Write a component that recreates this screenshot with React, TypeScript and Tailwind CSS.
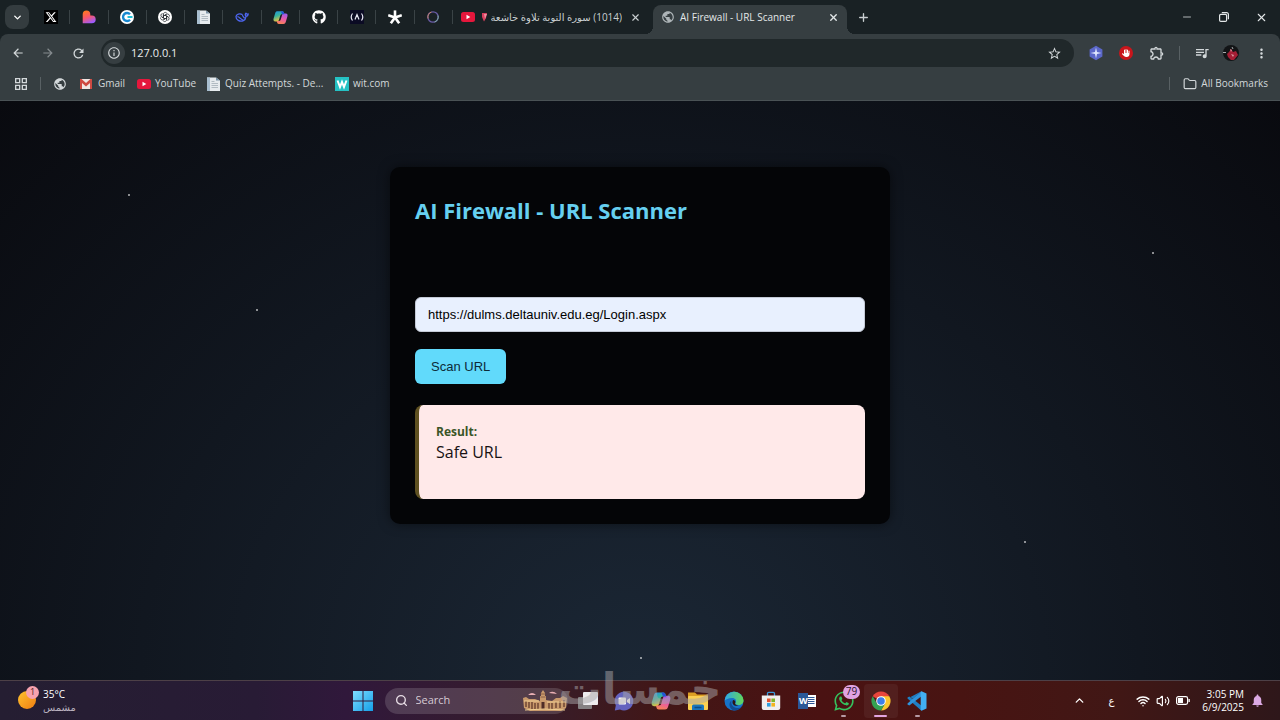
import { useState } from "react";
import type { ReactNode } from "react";
import { ChevronDown, ChevronUp, Folder, Minus, Plus, Search, Volume2, Wifi, X } from "lucide-react";
import { FaGithub, FaHand, FaWhatsapp, FaXTwitter } from "react-icons/fa6";
import {
  MdArrowBack,
  MdArrowForward,
  MdInfoOutline,
  MdMoreVert,
  MdNotifications,
  MdOutlineExtension,
  MdOutlineGridView,
  MdPublic,
  MdQueueMusic,
  MdRefresh,
  MdStarBorder,
} from "react-icons/md";

const STARS = [
  { left: 10, top: 16 },
  { left: 20, top: 36 },
  { left: 50, top: 96 },
  { left: 80, top: 76 },
  { left: 90, top: 26 },
];

const YoutubeIcon = () => (
  <svg viewBox="0 0 14 10" className="h-[10px] w-[14px] shrink-0">
    <rect width="14" height="10" rx="2.5" fill="#e5173c" />
    <path d="M5.5 2.8v4.4L9.3 5z" fill="#fff" />
  </svg>
);

const DocsIcon = () => (
  <svg viewBox="0 0 14 14" className="size-[14px] shrink-0">
    <path d="M0 .5h9l4 3V14H0z" fill="#e6ebee" />
    <path d="M0 .5h3V14H0z" fill="#a9bfd0" />
    <path d="M9 .5l4 3H9z" fill="#7c95a8" />
    <path d="M4.500 4.500h3M4.500 6.500h6.500M4.500 8.500h6.500M4.500 10.500h6.500" stroke="#9aa6af" strokeWidth=".7" />
  </svg>
);

const LovableIcon = () => (
  <svg viewBox="0 0 14 14" className="size-[14px]">
    <defs>
      <linearGradient id="lovable" x1="0.2" y1="0" x2="0.6" y2="1">
        <stop offset="0" stopColor="#ff7a1a" />
        <stop offset=".5" stopColor="#f9566a" />
        <stop offset="1" stopColor="#9b5cff" />
      </linearGradient>
    </defs>
    <path
      d="M.7 4.2a3.8 3.8 0 0 1 7.6 0v1.4h1.6a3.7 3.7 0 0 1 0 7.6H.7z"
      fill="url(#lovable)"
    />
  </svg>
);

const CrispIcon = () => (
  <svg viewBox="0 0 14 14" className="size-[14px]">
    <circle cx="7" cy="7" r="7" fill="#fff" />
    <path d="M10 4.300a4 4 0 1 0 0 5.400" fill="none" stroke="#1787cf" strokeWidth="2.400" />
    <path d="M7.500 7h5" stroke="#1fc0d6" strokeWidth="2" />
  </svg>
);

const KnotIcon = () => (
  <svg viewBox="0 0 14 14" className="size-[14px]">
    <circle cx="7" cy="7" r="7" fill="#fff" />
    <g fill="none" stroke="#20252a" strokeWidth=".7">
      {[0, 60, 120, 180, 240, 300].map((angle) => (
        <path
          key={angle}
          transform={`rotate(${angle} 7 7)`}
          d="M5.400 7.900V4.200a1.900 1.900 0 0 1 3.400-1.100M5.400 6.100l3.200-1.900"
        />
      ))}
    </g>
  </svg>
);

const WhaleIcon = () => (
  <svg viewBox="0 0 14 14" className="size-[14px]" fill="none" stroke="#4d66f0">
    <path
      d="M7.400 4.600C4.800 3 1.200 4 1 6.600c-.2 3.200 3.800 5.600 7.400 4.100 2.300-1 2.500-3.400 2.600-4.300 1.400 0 2-.8 2.200-2.400-1 .4-1.600.2-2.300-.8-.8.8-.8 2 .1 3.200"
      strokeWidth="1.300"
      strokeLinejoin="round"
    />
    <path d="M2.400 6.700c2.400.1 3.200 3 6 3.300M7.500 4.600c-.2 1.800 1 2 2.200 3.800" strokeWidth="1.200" />
  </svg>
);

const AsteriskIcon = () => (
  <svg viewBox="0 0 14 14" className="size-[14px]" stroke="#fff" strokeWidth="2.600">
    {[0, 72, 144, 216, 288].map((angle) => (
      <path key={angle} transform={`rotate(${angle} 7 7.500)`} d="M7 7.500V.4" />
    ))}
  </svg>
);

const CopilotIcon = ({ className }: { className: string }) => (
  <svg viewBox="0 0 20 20" className={className}>
    <defs>
      <linearGradient id="copilotCool" x1="0" y1="0" x2=".4" y2="1">
        <stop offset="0" stopColor="#1d8fe8" />
        <stop offset=".5" stopColor="#39b59b" />
        <stop offset="1" stopColor="#f6c13b" />
      </linearGradient>
      <linearGradient id="copilotWarm" x1=".6" y1="0" x2=".3" y2="1">
        <stop offset="0" stopColor="#a25be8" />
        <stop offset=".5" stopColor="#ea5aa5" />
        <stop offset="1" stopColor="#f78452" />
      </linearGradient>
    </defs>
    <path d="M6 1.500h6.200c1.500 0 2 .8 2.400 2.200l.5 1.800H12c-1.500 0-2 .8-2.400 2.200L8 13c-.5 1.500-1.200 2.200-2.600 2.200H3C.8 15.200.2 13.400.8 11.300L3 4c.5-1.700 1.400-2.500 3-2.500z" fill="url(#copilotCool)" />
    <path d="M14 18.500H7.800c-1.500 0-2-.8-2.400-2.200l-.5-1.800H8c1.500 0 2-.8 2.400-2.200L12 7c.5-1.500 1.200-2.200 2.600-2.200H17c2.200 0 2.800 1.800 2.200 3.900L17 16c-.5 1.700-1.400 2.500-3 2.500z" fill="url(#copilotWarm)" />
    <path d="M12.200 1.500c1.500 0 2 .8 2.400 2.200l.5 1.800H12l-1.500-4z" fill="#2353d6" />
  </svg>
);

const RingIcon = () => (
  <svg viewBox="0 0 14 14" className="size-[14px]" fill="none">
    <circle cx="7" cy="7" r="5.200" stroke="#6a5ca8" strokeWidth="1.300" />
    <path d="M2.100 8.500a5.200 5.200 0 0 1 3.300-6.500" stroke="#c98563" />
    <path d="M12 5.500a5.200 5.200 0 0 1-3.400 6.500" stroke="#7db0a0" />
  </svg>
);

const PINNED: { name: string; icon: ReactNode }[] = [
  { name: "X", icon: <span className="bg-black p-[1px] text-white"><FaXTwitter size={12} /></span> },
  { name: "Lovable", icon: <LovableIcon /> },
  { name: "Chat", icon: <CrispIcon /> },
  { name: "ChatGPT", icon: <KnotIcon /> },
  { name: "Quiz", icon: <DocsIcon /> },
  { name: "DeepSeek", icon: <WhaleIcon /> },
  { name: "Copilot", icon: <CopilotIcon className="size-[15px]" /> },
  { name: "GitHub", icon: <FaGithub size={14} className="text-white" /> },
  {
    name: "Lambda",
    icon: (
      <svg viewBox="0 0 14 14" className="size-[14px]" fill="none" stroke="#e8e8f4">
        <rect width="14" height="14" fill="#0b0b24" stroke="none" />
        <path d="M2.500 3.500Q-.1 7 2.500 10.500M11.500 3.500q2.600 3.500 0 7M5 9.500l2-5 2 5" strokeWidth="1.200" />
      </svg>
    ),
  },
  { name: "Asterisk", icon: <AsteriskIcon /> },
  { name: "Ring", icon: <RingIcon /> },
];

const TabStrip = () => (
  <div className="flex h-[34px] items-center">
    <button aria-label="Search tabs" className="ml-[5px] flex size-6 items-center justify-center rounded-lg bg-[#343c3f] text-white">
      <ChevronDown size={11} strokeWidth={3} />
    </button>
    <div className="ml-[3px] grid w-[421px] grid-cols-11">
      {PINNED.map(({ name, icon }) => (
        <button key={name} aria-label={name} className="flex h-[14px] items-center justify-center border-r border-[#3a4346]">
          {icon}
        </button>
      ))}
    </div>
    <div className="flex h-full w-[200px] items-center pr-3 pl-2 text-[#c9cfd1]">
      <YoutubeIcon />
      <svg viewBox="0 0 5 10" className="ml-[7px] h-[10px] w-[5px] shrink-0">
        <path d="M0 1h5L4 6 2 9.500 0 5z" fill="#d9405f" />
        <path d="M2 2h3L3 7z" fill="#f08ca0" />
      </svg>
      <span dir="rtl" className="ml-1 flex-1 overflow-hidden text-[10px] whitespace-nowrap">
        (1014) سورة التوبة تلاوة خاشعة
      </span>
      <button aria-label="Close tab" className="ml-2"><X size={11} strokeWidth={2.5} /></button>
    </div>
    <div className="relative mt-auto flex h-[29px] w-[194px] items-center rounded-t-lg bg-[#363e41] pr-2 pb-[5px] pl-2 text-[#e3e7e8]">
      <span className="absolute bottom-0 -left-2 size-2 bg-[radial-gradient(circle_at_top_left,transparent_8px,#363e41_8px)]" />
      <span className="absolute -right-2 bottom-0 size-2 bg-[radial-gradient(circle_at_top_right,transparent_8px,#363e41_8px)]" />
      <MdPublic size={14} className="text-[#aeb5b8]" />
      <span className="ml-[5px] flex-1 text-[10px] whitespace-nowrap">AI Firewall - URL Scanner</span>
      <button aria-label="Close active tab"><X size={11} strokeWidth={3} /></button>
    </div>
    <button aria-label="New tab" className="ml-[10px] text-[#c9cfd1]"><Plus size={13} strokeWidth={2.5} /></button>
    <div className="ml-auto flex items-center gap-[26px] pr-3 text-[#e3e7e8]">
      <button aria-label="Minimize"><Minus size={12} strokeWidth={1.5} /></button>
      <button aria-label="Restore">
        <svg viewBox="0 0 10 10" className="size-[10px]" fill="none" stroke="currentColor" strokeWidth="1.200">
          <rect x=".6" y="2.400" width="7" height="7" rx="1.200" />
          <path d="M2.800.6h4.800a1.800 1.800 0 0 1 1.800 1.800v4.800" />
        </svg>
      </button>
      <button aria-label="Close window"><X size={13} strokeWidth={2} /></button>
    </div>
  </div>
);

const Toolbar = () => (
  <div className="flex h-[36px] items-center rounded-t-lg bg-[#363e41] pt-[2px] text-[#d3d8da]">
    <div className="flex w-[101px] items-center gap-4 pl-[11px]">
      <button aria-label="Back"><MdArrowBack size={14} /></button>
      <button aria-label="Forward" className="text-[#858c8f]"><MdArrowForward size={14} /></button>
      <button aria-label="Reload"><MdRefresh size={15} /></button>
    </div>
    <div className="flex h-7 flex-1 items-center rounded-full bg-[#20282a] pr-3 pl-[2px]">
      <span className="flex size-[22px] items-center justify-center rounded-full bg-[#363e41]">
        <MdInfoOutline size={14} />
      </span>
      <input
        aria-label="Address"
        defaultValue="127.0.0.1"
        className="ml-[6px] min-w-0 flex-1 bg-transparent text-[11px] text-[#e8ecee] outline-none"
      />
      <button aria-label="Bookmark this page"><MdStarBorder size={15} /></button>
    </div>
    <div className="flex items-center pr-[11px] pl-[14px]">
      <button aria-label="Spark">
        <svg viewBox="0 0 16 16" className="size-4">
          <path d="M8 .8l6.400 3.600v7.200L8 15.200l-6.400-3.600V4.400z" fill="#5b67c9" />
          <path d="M8 2.500l1 4.500 4.500 1-4.500 1-1 4.500-1-4.500-4.500-1L7 7z" fill="#dfe6ff" />
        </svg>
      </button>
      <button aria-label="Ad blocker" className="ml-[15px] flex size-[14px] items-center justify-center rounded-full bg-[#c9151b] text-white">
        <FaHand size={8} />
      </button>
      <button aria-label="Extensions" className="ml-4"><MdOutlineExtension size={16} /></button>
      <span className="mx-[14px] h-[14px] w-px bg-[#596164]" />
      <button aria-label="Media"><MdQueueMusic size={16} /></button>
      <button aria-label="Profile" className="ml-[13px]">
        <svg viewBox="0 0 16 16" className="size-4">
          <circle cx="8" cy="8" r="8" fill="#121416" />
          <path d="M4 9l2-2 2-3 2 3 3-1 2 4-4 5H8l-3-3z" fill="#a51e35" />
          <path d="M7 4l2 1-1 2zM8 9l3 1-1 2z" fill="#d99ba2" />
          <path d="M0 7.500h3M9 2l1 2" stroke="#cfd3d6" strokeWidth=".8" />
        </svg>
      </button>
      <button aria-label="Menu" className="ml-[15px]"><MdMoreVert size={15} /></button>
    </div>
  </div>
);

const BookmarksBar = () => (
  <div className="flex h-[31px] items-center border-b border-[#4a5255] bg-[#363e41] pb-[3px] text-[10px] whitespace-nowrap text-[#d3d8da]">
    <button aria-label="Apps" className="ml-[13px]"><MdOutlineGridView size={16} /></button>
    <span className="mr-3 ml-[11px] h-[13px] w-px bg-[#596164]" />
    <a href="#" aria-label="Site" className="w-[27px]"><MdPublic size={14} /></a>
    <a href="#" className="flex w-[57px] items-center gap-[6px]">
      <svg viewBox="0 0 12 10" className="h-[10px] w-3">
        <rect width="12" height="10" rx="1" fill="#f1e6e4" />
        <path d="M0 0h1.500L6 4 10.500 0H12v10h-2V4L6 7.500 2 4v6H0z" fill="#cf4a42" />
      </svg>
      Gmail
    </a>
    <a href="#" className="flex w-[70px] items-center gap-1">
      <YoutubeIcon />
      YouTube
    </a>
    <a href="#" className="flex w-[128px] items-center gap-1">
      <DocsIcon />
      Quiz Attempts. - De...
    </a>
    <a href="#" className="flex items-center gap-1">
      <svg viewBox="0 0 14 14" className="size-[14px]">
        <rect width="14" height="14" fill="#25c2c4" />
        <path d="M2.500 3.500L5 10l2-5 2 5 2.500-6.500" fill="none" stroke="#fff" strokeWidth="2" />
      </svg>
      wit.com
    </a>
    <span className="ml-auto h-[13px] w-px bg-[#596164]" />
    <button className="mr-3 ml-[13px] flex items-center gap-1">
      <Folder size={14} strokeWidth={2} />
      All Bookmarks
    </button>
  </div>
);

const Scanner = () => {
  const [url, setUrl] = useState("https://dulms.deltauniv.edu.eg/Login.aspx");
  const [result, setResult] = useState("Safe URL");

  return (
    <main className="relative flex-1 bg-[radial-gradient(ellipse_at_bottom,#1b2735_0%,#090a0f_100%)] px-4 pt-[66px] pb-10">
      {STARS.map(({ left, top }) => (
        <span key={left} className="absolute size-[2px] rounded-full bg-white/70" style={{ left: `${left}%`, top: `${top}%` }} />
      ))}
      <form
        onSubmit={(e) => {
          e.preventDefault();
          setResult("Safe URL");
        }}
        className="relative mx-auto max-w-[500px] rounded-[10px] bg-[#040507] p-[25px] shadow-[0_0_12px_rgba(0,0,0,0.5)]"
      >
        <h1 className="text-[22px] leading-9 font-bold text-[#66d0f0]">AI Firewall - URL Scanner</h1>
        <input
          aria-label="URL"
          value={url}
          onChange={(e) => setUrl(e.target.value)}
          className="mt-[69px] block h-[35px] w-full rounded-md border border-[#c4cad6] bg-[#e8f0fe] px-3 font-['Liberation_Sans',Arial,sans-serif] text-[13px] text-black outline-none"
        />
        <button className="mt-[17px] block h-[35px] rounded-md bg-[#61dafb] px-4 font-['Liberation_Sans',Arial,sans-serif] text-[13px] text-[#0d2b38]">
          Scan URL
        </button>
        <section className="mt-[21px] min-h-[94px] rounded-lg border-l-4 border-[#5f5121] bg-[#ffe9e9] px-[17px] pt-[17px] pb-4">
          <h2 className="text-[12px] leading-5 font-bold text-[#3a5527]">Result:</h2>
          <p className="text-base leading-5 text-[#171214]">{result}</p>
        </section>
      </form>
    </main>
  );
};

const EdgeIcon = () => (
  <svg viewBox="0 0 20 20" className="size-5">
    <defs>
      <linearGradient id="edgeTop" x1="0" x2="1">
        <stop offset="0" stopColor="#2fa8e8" />
        <stop offset="1" stopColor="#63d858" />
      </linearGradient>
    </defs>
    <circle cx="10" cy="10" r="9.500" fill="#1672c9" />
    <path d="M.6 9.500A9.500 9.500 0 0 1 19.500 9c.3 3-2 5-5 5-2.500 0-3.800-1-3-2 1.500-2.500 0-5-3.500-5C4.500 7 1.500 8.500.6 9.500z" fill="url(#edgeTop)" />
    <path d="M7.500 9.500c-1 3.500 1.500 7.500 5.500 7.500 2 0 4-.5 5-1.500-2 2.700-5 4-8 4-4-1-6.500-7-2.500-10z" fill="#124c93" />
    <path d="M9 9c2 .2 2.800 1.500 2.200 3-.6 1.200.5 2 3.300 2.300-3 1.500-7.500-.5-5.500-5.300z" fill="#2b1519" />
  </svg>
);

const ChromeIcon = () => (
  <svg viewBox="0 0 20 20" className="size-5">
    <path d="M10 10L1.700 5.200A9.600 9.600 0 0 1 18.300 5.200z" fill="#e8453c" />
    <path d="M10 10V5.200h8.300A9.600 9.600 0 0 1 10 19.600l4.100-7.200z" fill="#fbc62d" />
    <path d="M10 10l4.100 2.400L10 19.600A9.600 9.600 0 0 1 1.700 5.200l4.200 7.200z" fill="#34a352" />
    <circle cx="10" cy="10" r="4.800" fill="#fff" />
    <circle cx="10" cy="10" r="3.800" fill="#3d7fe8" />
  </svg>
);

const VsCodeIcon = () => (
  <svg viewBox="0 0 20 20" className="size-5">
    <path d="M14.500.3L5.800 8.300 2.300 5.600.5 6.500v.9L14.500 19.700l-.3-5.200L3.500 6z" fill="#1f7fc4" />
    <path d="M14.500.3L.5 12.600v.9l1.800.9L14.200 5.500z" fill="#2f94dc" />
    <path d="M14.500.3L19.500 2.600v14.800l-5 2.300-.8-.8V1.100z" fill="#42aef2" />
  </svg>
);

const TASKS: { name: string; icon: ReactNode; badge?: string; open?: boolean; active?: boolean }[] = [
  {
    name: "Task view",
    icon: (
      <svg viewBox="0 0 20 20" className="size-5">
        <rect y="6" width="14" height="12" rx="1" fill="#858183" />
        <rect x="5" y="1" width="15" height="13" rx="1" fill="#eeecee" />
      </svg>
    ),
  },
  {
    name: "Chat",
    icon: (
      <svg viewBox="0 0 20 20" className="size-5">
        <path d="M10 .8a9.300 9.300 0 1 1-4 17.700L.8 19.400l1-4.800A9.300 9.300 0 0 1 10 .8z" fill="#6463be" />
        <rect x="4.500" y="6.500" width="7.500" height="7" rx="1" fill="#fff" />
        <path d="M13 9l3-2v6l-3-2z" fill="#fff" />
      </svg>
    ),
  },
  { name: "Copilot", icon: <CopilotIcon className="size-5" /> },
  {
    name: "File Explorer",
    icon: (
      <svg viewBox="0 0 22 20" className="h-5 w-[22px]">
        <path d="M1 1.500h7l2 2h11v5H1z" fill="#dc9f24" />
        <rect x="1" y="5" width="20" height="14" rx="1" fill="#fbd052" />
        <path d="M5 19v-4a1.500 1.500 0 0 1 1.500-1.500h9A1.500 1.500 0 0 1 17 15v4z" fill="#1b76bd" />
        <path d="M7.500 16.500h7" stroke="#0c4c86" strokeWidth="1.500" />
      </svg>
    ),
  },
  { name: "Edge", icon: <EdgeIcon /> },
  {
    name: "Store",
    icon: (
      <svg viewBox="0 0 20 20" className="size-5">
        <path d="M6.500 5V2.500A1.200 1.200 0 0 1 7.700 1.300h4.600a1.200 1.200 0 0 1 1.200 1.200V5" fill="none" stroke="#3a9bdc" strokeWidth="1.300" />
        <path d="M.8 4.500h18.400V17a2 2 0 0 1-2 2H2.800a2 2 0 0 1-2-2z" fill="#f0efef" />
        <path d="M6 7.500h3.600v3.600H6z" fill="#e35230" />
        <path d="M10.400 7.500H14v3.600h-3.600z" fill="#7eb72b" />
        <path d="M6 12h3.600v3.600H6z" fill="#2f9fe0" />
        <path d="M10.400 12H14v3.600h-3.600z" fill="#f3b51f" />
      </svg>
    ),
  },
  {
    name: "Word",
    icon: (
      <span className="flex h-4 items-center">
        <span className="flex h-4 w-[10px] items-center justify-center bg-[#2b5797] text-[9px] font-bold text-white">W</span>
        <svg viewBox="0 0 8 12" className="h-3 w-2">
          <path d="M0 0h8v12H0z" fill="#fff" />
          <path d="M0 2.500h6.500M0 4.500h6.500M0 6.500h6.500M0 8.500h6.500" stroke="#2b5797" />
        </svg>
      </span>
    ),
  },
  { name: "WhatsApp", icon: <FaWhatsapp size={22} className="text-[#35c25d]" />, badge: "79", open: true },
  { name: "Chrome", icon: <ChromeIcon />, open: true, active: true },
  { name: "VS Code", icon: <VsCodeIcon />, open: true },
];

const Skyline = () => (
  <svg viewBox="0 0 46 22" className="ml-auto h-[22px] w-[46px]">
    <path d="M6 5q4-4 8 0zM27 3q4-3 8 1z" fill="#eab0b4" />
    <path d="M1 8l3-1 3 2h6l5 2V6h1V3l2-3 2 3v3h1v4l6 1 4-3h4l3-2 4 2-1 10-5 3H8l-6-3z" fill="#c99a6c" />
    <path d="M18.500 7h5M18.500 4h5" stroke="#7d513c" strokeWidth=".8" />
    <path d="M4 11v6M7 12v6M10 12v7M13 13v6M16 13v6M27 13v6M30 13v6M34 12v6M38 11v7M42 10v7" stroke="#63392c" strokeWidth="1.300" />
    <path d="M19.500 12h3v7h-3z" fill="#4e2d27" />
    <path d="M2 11h15M25 12h19M3 20q18-2 40 0" stroke="#f0cf93" fill="none" />
  </svg>
);

const Taskbar = () => (
  <footer className="relative grid h-10 grid-cols-[1fr_auto_1fr] items-center border-t border-[#4d4047] bg-[linear-gradient(90deg,#251e32_0%,#281b35_20%,#30183b_27%,#371d2a_42%,#421616_52%,#4a1212_64%,#481412_75%,#411715_87%,#2e171a_100%)] text-[10px] text-white">
    <div className="flex items-center pl-4">
      <span className="relative flex size-[22px] items-end">
        <span className="mb-[3px] ml-[2px] size-[18px] rounded-full bg-[linear-gradient(135deg,#ffc22e,#ef7d12)]" />
        <span className="absolute -top-1 left-[10px] flex size-[13px] items-center justify-center rounded-full bg-[#f7a1ae] text-[9px] text-[#4a1a22]">
          1
        </span>
      </span>
      <span className="ml-[5px] flex flex-col leading-[13px]">
        <span>35°C</span>
        <span dir="rtl" className="text-[#b9b1bf]">مشمس</span>
      </span>
    </div>
    <div className="flex items-center">
      <button aria-label="Start" className="flex w-[37px] justify-center">
        <svg viewBox="0 0 20 20" className="size-5">
          <defs>
            <linearGradient id="start" x2="1" y2="1">
              <stop offset="0" stopColor="#7fdcff" />
              <stop offset="1" stopColor="#149fe8" />
            </linearGradient>
          </defs>
          <path d="M0 0h9.500v9.500H0zM10.500 0H20v9.500h-9.500zM0 10.500h9.500V20H0zM10.500 10.500H20V20h-9.500z" fill="url(#start)" />
        </svg>
      </button>
      <label className="mr-[2px] ml-[3px] flex h-[26px] w-[183px] items-center rounded-full bg-white/15 pl-[10px]">
        <Search size={13} strokeWidth={2.5} className="shrink-0 text-[#e7dde5]" />
        <input
          placeholder="Search"
          aria-label="Search"
          className="ml-2 w-20 bg-transparent text-[11px] outline-none placeholder:text-[#d5cad3]"
        />
        <Skyline />
      </label>
      <div className="grid w-[366px] grid-cols-10 justify-items-center">
        {TASKS.map(({ name, icon, badge, open, active }) => (
          <button
            key={name}
            aria-label={name}
            className={`relative flex h-[34px] w-[34px] items-center justify-center rounded-sm ${active ? "bg-white/5" : ""}`}
          >
            {icon}
            {badge && (
              <span className="absolute top-[1px] right-[1px] flex h-[14px] w-[17px] items-center justify-center rounded-full bg-[#e0a3e2] text-[10px] text-[#2a1230]">
                {badge}
              </span>
            )}
            {open && (
              <span className={`absolute bottom-[1px] h-[2px] rounded-full ${active ? "w-[13px] bg-[#e3a5e0]" : "w-[5px] bg-[#b79ba5]"}`} />
            )}
          </button>
        ))}
      </div>
    </div>
    <div className="flex items-center justify-end pr-[15px]">
      <button aria-label="Show hidden icons"><ChevronUp size={13} strokeWidth={2.5} /></button>
      <button aria-label="Input language" className="ml-5 w-[10px]">ع</button>
      <button aria-label="Network and sound" className="ml-5 flex items-center gap-[6px]">
        <Wifi size={14} strokeWidth={2.5} />
        <Volume2 size={14} strokeWidth={2} />
        <svg viewBox="0 0 14 9" className="h-[9px] w-[14px]">
          <rect x=".6" y=".6" width="11" height="7.800" rx="1.800" fill="none" stroke="#fff" strokeWidth="1.200" />
          <path d="M2 2h5v5H2zM12.500 3h1.300v3h-1.300z" fill="#fff" />
        </svg>
      </button>
      <span className="ml-3 text-right leading-[13px]">
        <span className="block">3:05 PM</span>
        <span className="block">6/9/2025</span>
      </span>
      <button aria-label="Notifications" className="ml-[6px] text-[#dcaae4]"><MdNotifications size={15} /></button>
    </div>
    <span
      dir="rtl"
      className="pointer-events-none absolute inset-x-0 -top-4 text-center font-['DejaVu_Sans',sans-serif] text-[43px] leading-[48px] font-bold text-[#a8a5a8] opacity-50"
    >
      خمسات
    </span>
  </footer>
);

export default function App() {
  return (
    <div className="flex min-h-screen flex-col bg-[#090a0f] font-['Open_Sans','DejaVu_Sans',sans-serif]">
      <header className="bg-[#192124]">
        <TabStrip />
        <Toolbar />
        <BookmarksBar />
      </header>
      <Scanner />
      <Taskbar />
    </div>
  );
}
